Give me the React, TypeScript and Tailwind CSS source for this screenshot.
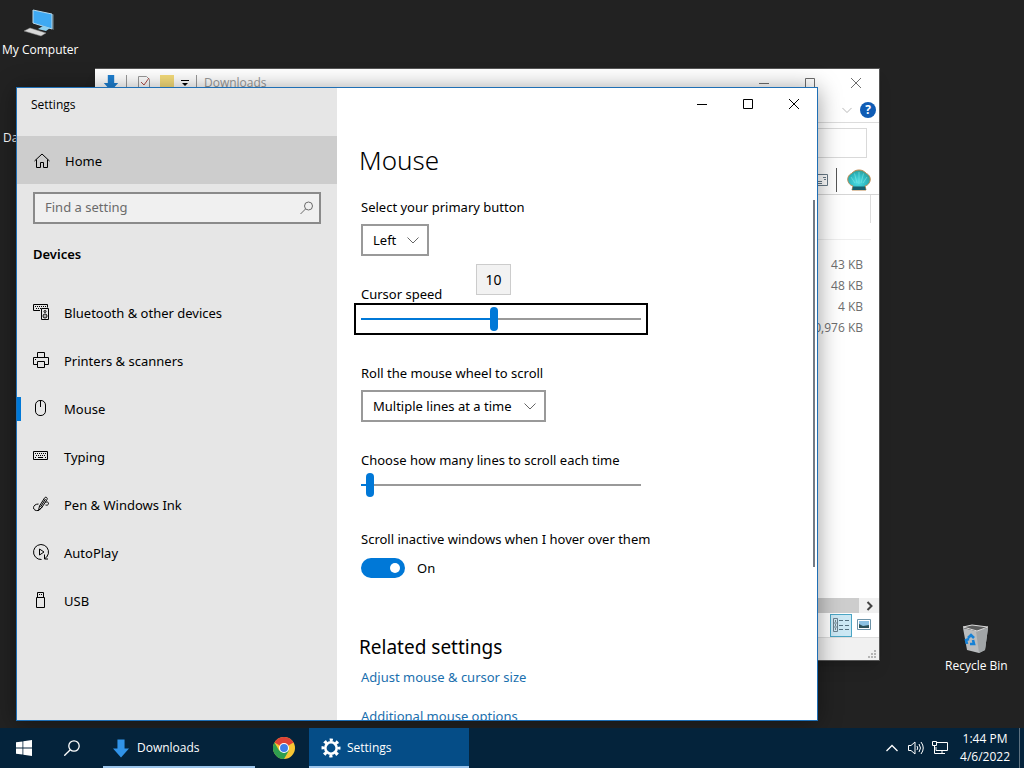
import React, { useState } from 'react';

const navItems = [
  { id: 'bluetooth', label: 'Bluetooth & other devices' },
  { id: 'printers', label: 'Printers & scanners' },
  { id: 'mouse', label: 'Mouse' },
  { id: 'typing', label: 'Typing' },
  { id: 'pen', label: 'Pen & Windows Ink' },
  { id: 'autoplay', label: 'AutoPlay' },
  { id: 'usb', label: 'USB' },
];

const fileSizes = ['43 KB', '48 KB', '4 KB', '40,976 KB'];

const Icon: React.FC<{ className?: string; box?: number; children: React.ReactNode }> = ({
  className = 'h-4 w-4',
  box = 16,
  children,
}) => (
  <svg
    viewBox={`0 0 ${box} ${box}`}
    className={`shrink-0 ${className}`}
    fill="none"
    stroke="currentColor"
    aria-hidden="true"
  >
    {children}
  </svg>
);

const NavIcon: React.FC<{ id: string }> = ({ id }) => {
  switch (id) {
    case 'bluetooth':
      return (
        <Icon>
          <path d="M7 6.500H.5v-6h14v3" />
          <path d="M2 2.500h11M3 4.500h5" strokeDasharray="1 1" />
          <path d="M8.500 4.500h7v11h-7z" />
          <circle cx="12" cy="7.500" r="1" />
          <circle cx="12" cy="12" r="2" />
          <path d="M11.500 12h1" />
        </Icon>
      );
    case 'printers':
      return (
        <Icon>
          <path d="M4.500 5V.5h7V5M4.500 12.500h-4v-7h15v7h-4" />
          <path d="M4.500 9.500h7v6h-7zM2 7.500h1" />
        </Icon>
      );
    case 'mouse':
      return (
        <Icon>
          <rect x="2.500" y=".5" width="10" height="15" rx="4.500" />
          <path d="M7.500 1v6" />
        </Icon>
      );
    case 'typing':
      return (
        <Icon>
          <path d="M.5 3.500h14v8H.5z" />
          <path d="M2 5.500h11M3 7.500h10" strokeDasharray="1 1" />
          <path d="M2 9.500h1M5 9.500h5M12 9.500h1" />
        </Icon>
      );
    case 'pen':
      return (
        <Icon>
          <path d="m5.500 14.500 1-4.500 5-8c1-1.600 3.500-.4 2.500 1.500L8.500 12z" />
          <path d="m7.500 11 5-8M5.500 8C2.500 8 .5 9.700.5 11.700s2 3.300 5 2.800L9 11M12.500 6.500c1.500-1 3-.5 3 1s-1.500 2-3 1.500" />
        </Icon>
      );
    case 'autoplay':
      return (
        <Icon>
          <path d="M8.500 15.500A7.500 7.500 0 1 1 13.800 12.800" />
          <path d="M11.500 10.500v4.500H15M11.500 15l2.500-2.500M6.500 5v6l4.500-3z" />
        </Icon>
      );
    default:
      return (
        <Icon>
          <path d="M4.500 5V.5h6V5M3.500 5.500h8v10h-8z" />
          <path d="M6 2.500h1M8 2.500h1" />
        </Icon>
      );
  }
};

const Chevron: React.FC<{ className?: string }> = ({ className = 'h-3 w-3' }) => (
  <Icon box={12} className={className}>
    <path d="m.5 3.500 5.500 5.500 5.500-5.500" />
  </Icon>
);

const WindowButtons: React.FC = () => (
  <div className="flex h-8 justify-end">
    <button aria-label="Minimize" className="flex w-[46px] items-center justify-center">
      <Icon className="h-3 w-3" box={12}>
        <path d="M1 6.500h10" />
      </Icon>
    </button>
    <button aria-label="Maximize" className="flex w-[46px] items-center justify-center">
      <Icon className="h-3 w-3" box={12}>
        <path d="M1.500 1.500h9v9h-9z" />
      </Icon>
    </button>
    <button aria-label="Close" className="flex w-[46px] items-center justify-center">
      <Icon className="h-3 w-3" box={12}>
        <path d="m1 1 10 10M11 1 1 11" />
      </Icon>
    </button>
  </div>
);

const DownArrow: React.FC<{ className: string }> = ({ className }) => (
  <svg viewBox="0 0 18 20" className={`shrink-0 ${className}`} aria-hidden="true">
    <path d="M5 0h8v10h5l-9 10-9-10h5z" fill="currentColor" />
  </svg>
);

interface SliderProps {
  id: string;
  min: number;
  max: number;
  value: number;
  onChange: (value: number) => void;
}

const Slider: React.FC<SliderProps> = ({ id, min, max, value, onChange }) => {
  const fill = ((value - min) / (max - min)) * 100;
  return (
    <input
      id={id}
      type="range"
      min={min}
      max={max}
      value={value}
      onChange={(e) => onChange(Number(e.target.value))}
      style={{ backgroundImage: `linear-gradient(to right, #0078d7 ${fill}%, #999999 ${fill}%)` }}
      className="block h-6 w-[280px] appearance-none bg-[length:100%_2px] bg-center bg-no-repeat outline-none [&::-webkit-slider-thumb]:h-6 [&::-webkit-slider-thumb]:w-2 [&::-webkit-slider-thumb]:appearance-none [&::-webkit-slider-thumb]:rounded-full [&::-webkit-slider-thumb]:bg-[#0078d7]"
    />
  );
};

interface DropdownProps {
  id: string;
  options: string[];
  className: string;
}

const Dropdown: React.FC<DropdownProps> = ({ id, options, className }) => (
  <div className={`relative h-8 ${className}`}>
    <select
      id={id}
      className="h-full w-full appearance-none border-2 border-[#999999] bg-white pl-2.5 text-[13px] text-black"
    >
      {options.map((option) => (
        <option key={option}>{option}</option>
      ))}
    </select>
    <Chevron className="pointer-events-none absolute top-2.5 right-2.5 h-3 w-3 text-[#666666]" />
  </div>
);

const Shell: React.FC = () => (
  <svg viewBox="0 0 24 22" className="h-[22px] w-6 shrink-0" aria-hidden="true">
    <defs>
      <radialGradient id="shell" cx="0.45" cy="0.6" r="0.6">
        <stop offset="0" stopColor="#4fe0e6" />
        <stop offset="0.7" stopColor="#2bb3bb" />
        <stop offset="1" stopColor="#3d9a8c" />
      </radialGradient>
    </defs>
    <path
      d="M6 17C2 16 0 12 1 8.500c.6-2 2-3.200 3.500-4C7 2 9 1 12 1s5 1 7.500 3.500c1.500.8 2.900 2 3.500 4 1 3.500-1 7.500-5 8.500l1 4H5z"
      fill="url(#shell)"
      stroke="#c08a50"
    />
    <path d="M12 15V3M10 14 7.500 4.500M14 14l2.500-9.500M8 14 4 8M16 14l4-6" stroke="#7fe6e0" strokeWidth=".6" fill="none" />
    <path d="M6 17.500h12l.8 3.500H5.200z" fill="#17606f" />
  </svg>
);

const ExplorerWindow: React.FC = () => (
  <section
    aria-label="Downloads"
    className="absolute top-[68px] left-[95px] flex h-[593px] w-[785px] flex-col border-t border-r border-b border-[#555555] bg-white text-[#6d6d6d] shadow-lg"
  >
    <header className="flex h-7 items-center">
      <div className="flex flex-1 items-center pl-2 text-xs text-[#999999]">
        <DownArrow className="h-4 w-4 text-[#1e7fd0]" />
        <span className="ml-[7px] h-4 w-px bg-[#999999]" />
        <Icon className="ml-2.5 h-4 w-4">
          <path d="M1.500 1.500h8l3 3v10h-11z" />
          <path d="m4 7 3 3 5-7" stroke="#b0504a" />
        </Icon>
        <span className="ml-[7px] h-4 w-3.5 bg-[#f5dc7a]" />
        <Icon className="ml-1.5 h-3 w-2.5 text-black" box={10}>
          <path d="M1 2.500h8" />
          <path d="M2 5h6L5 8z" fill="currentColor" stroke="none" />
        </Icon>
        <span className="mr-[7px] ml-1.5 h-4 w-px bg-[#999999]" />
        Downloads
      </div>
      <WindowButtons />
    </header>
    <div className="flex h-[26px] items-center justify-end gap-2 border-b border-[#dcdcdc] pr-[3px]">
      <Chevron className="h-2.5 w-2.5 text-[#aaaaaa]" />
      <button
        aria-label="Help"
        className="flex h-4 w-4 items-center justify-center rounded-full bg-[#0f5cb5] text-xs font-bold text-white"
      >
        ?
      </button>
    </div>
    <div className="flex h-10 items-center pr-3">
      <input aria-label="Search Downloads" className="ml-auto h-[30px] w-48 border border-[#d9d9d9]" />
    </div>
    <div className="flex h-8 items-center justify-end border-b border-[#d5d5d5] pt-0.5 pr-2">
      <Icon className="h-4 w-4">
        <path d="M0 2.500h14.500v11H0M10 5.500h3M11 7.500h2M0 9.500h9M0 11.500h9" stroke="#687a87" />
      </Icon>
      <span className="mr-2.5 ml-[7px] h-6 w-px bg-[#555555]" />
      <Shell />
    </div>
    <div className="mr-2 h-[45px] border-b border-[#eeeeee]">
      <div className="h-7 border-r border-[#dddddd]" />
    </div>
    <ul className="flex-1 pt-3.5 pr-4 text-right text-xs leading-[21px]">
      {fileSizes.map((size) => (
        <li key={size}>{size}</li>
      ))}
    </ul>
    <div className="flex h-[15px] justify-end bg-[#f0f0f0]">
      <span className="flex-1 bg-[#cdcdcd]" />
      <button aria-label="Scroll right" className="flex w-5 items-center justify-center text-[#444444]">
        <Icon className="h-2.5 w-2.5" box={10}>
          <path d="m3.500 1 4 4-4 4" strokeWidth="2" />
        </Icon>
      </button>
    </div>
    <div className="flex h-[25px] items-center justify-end gap-1 border-b border-[#dddddd] pr-[7px]">
      <button
        aria-label="Details view"
        className="flex h-[23px] w-[22px] items-center justify-center border border-[#4aa5c4] bg-[#cce8f4]"
      >
        <Icon>
          <path d="M.5 1.500h4v13h-4zM.5 6h4M.5 10h4" stroke="#6b7f8c" />
          <path d="M2 4h1M2 8h1M2 12h1" stroke="#222222" />
          <path d="M6 3.500h4M12 3.500h4M6 8.500h4M12 8.500h4M6 12.500h4M12 12.500h4" stroke="#54707f" />
        </Icon>
      </button>
      <button aria-label="Large icons view" className="flex h-[23px] w-4 items-center justify-center">
        <Icon className="h-4 w-4">
          <path d="M1.500 2.500h13v10h-13z" stroke="#6d93a8" fill="#ffffff" />
          <path d="M3 4h10v7H3z" fill="#8cc1e2" stroke="none" />
          <path d="m3 7 4 2 6-1v3H3z" fill="#2d5057" stroke="none" />
        </Icon>
      </button>
    </div>
    <div className="flex h-[22px] items-end justify-end bg-[#f1f1f1] p-0.5">
      <Icon className="h-2.5 w-2.5 text-[#b5b5b5]" box={10}>
        <path d="M1 9h2M4 9h2M7 9h2M4 6h2M7 6h2M7 3h2" strokeWidth="2" />
      </Icon>
    </div>
  </section>
);

const SettingsWindow: React.FC = () => {
  const [active, setActive] = useState('mouse');
  const [speed, setSpeed] = useState(10);
  const [lines, setLines] = useState(3);
  const [hoverScroll, setHoverScroll] = useState(true);

  return (
    <section
      aria-label="Settings"
      className="absolute top-[87px] left-4 flex h-[634px] w-[802px] border border-[#1f6fb5] bg-white font-['Noto_Sans','Open_Sans',sans-serif] text-[13px] leading-5 text-black shadow-[0_2px_22px_rgba(0,0,0,0.4)]"
    >
      <aside className="w-80 shrink-0 bg-[#e6e6e6]">
        <h1 className="h-12 pt-[7px] pl-3.5 font-['Open_Sans','Noto_Sans',sans-serif] text-xs leading-5">
          Settings
        </h1>
        <button className="flex h-12 w-full items-center bg-[#cdcdcd] pt-0.5 pl-[17px] text-left">
          <Icon>
            <path d="m.5 8 7.500-7 7.500 7M2.500 6.500v8h4v-5h3v5h4v-8" />
          </Icon>
          <span className="ml-[15px]">Home</span>
        </button>
        <div className="relative mx-4 mt-2">
          <input
            type="text"
            aria-label="Find a setting"
            placeholder="Find a setting"
            className="block h-8 w-full border-2 border-[#8a8a8a] bg-[#f0f0f0] pb-0.5 pl-2.5 outline-none placeholder:text-[#6b6b6b]"
          />
          <Icon className="pointer-events-none absolute top-2 right-1.5 h-4 w-4 text-[#6b6b6b]">
            <circle cx="9.500" cy="6" r="4" />
            <path d="m6.500 9-5 5" />
          </Icon>
        </div>
        <h2 className="mt-5 pl-4 font-semibold">Devices</h2>
        <nav className="mt-[25px]">
          {navItems.map((item) => (
            <button
              key={item.id}
              onClick={() => setActive(item.id)}
              className="flex h-12 w-full items-center text-left"
            >
              <span className={`h-6 w-1 ${active === item.id ? 'bg-[#0078d7]' : ''}`} />
              <span className="ml-3 pb-0.5">
                <NavIcon id={item.id} />
              </span>
              <span className="ml-[15px]">{item.label}</span>
            </button>
          ))}
        </nav>
      </aside>

      <main className="relative flex-1 overflow-hidden">
        <WindowButtons />
        <h2 className="mt-5 pl-[22px] text-[26px] leading-10 font-light">Mouse</h2>
        <div className="pl-6">
          <label htmlFor="primary-button" className="mt-[17px] block">
            Select your primary button
          </label>
          <Dropdown id="primary-button" options={['Left', 'Right']} className="mt-[7px] w-[68px]" />

          <div className="relative mt-7">
            <label htmlFor="cursor-speed" className="block h-[19px]">
              Cursor speed
            </label>
            <output
              htmlFor="cursor-speed"
              className="absolute bottom-2 left-[115px] flex h-[31px] w-[35px] items-center justify-center border border-[#cccccc] bg-[#f2f2f2] text-sm"
            >
              {speed}
            </output>
          </div>
        </div>
        <div className="ml-[17px] w-[294px] border-2 border-black px-[5px] py-0.5">
          <Slider id="cursor-speed" min={1} max={20} value={speed} onChange={setSpeed} />
        </div>
        <div className="pl-6">
          <label htmlFor="wheel-mode" className="mt-7 block">
            Roll the mouse wheel to scroll
          </label>
          <Dropdown
            id="wheel-mode"
            options={['Multiple lines at a time', 'One screen at a time']}
            className="mt-[7px] w-[185px]"
          />

          <label htmlFor="scroll-lines" className="mt-7 mb-[3px] block">
            Choose how many lines to scroll each time
          </label>
          <Slider id="scroll-lines" min={1} max={100} value={lines} onChange={setLines} />

          <p id="hover-scroll" className="mt-8">
            Scroll inactive windows when I hover over them
          </p>
          <div className="mt-[9px] flex items-center">
            <button
              role="switch"
              aria-checked={hoverScroll}
              aria-labelledby="hover-scroll"
              onClick={() => setHoverScroll(!hoverScroll)}
              className={`flex h-5 w-11 items-center rounded-full px-[5px] ${
                hoverScroll ? 'justify-end bg-[#0078d7]' : 'bg-[#999999]'
              }`}
            >
              <span className="h-2.5 w-2.5 rounded-full bg-white" />
            </button>
            <span className="ml-3">{hoverScroll ? 'On' : 'Off'}</span>
          </div>
        </div>
        <h3 className="mt-[53px] pl-[22px] text-[19px] leading-8">Related settings</h3>
        <div className="flex flex-col items-start gap-[19px] pt-1 pl-6 text-[#1a6fae]">
          <a href="#cursor-size">Adjust mouse &amp; cursor size</a>
          <a href="#mouse-options">Additional mouse options</a>
        </div>
        <span className="absolute top-28 right-0.5 h-[367px] w-0.5 bg-[#737b85]" />
      </main>
    </section>
  );
};

const Taskbar: React.FC = () => (
  <footer className="relative flex h-10 shrink-0 items-stretch bg-[#04233b] text-xs text-white">
    <button aria-label="Start" className="flex w-12 items-center justify-center">
      <svg viewBox="0 0 16 16" className="h-4 w-4" fill="currentColor" aria-hidden="true">
        <path d="M0 2.300 6.500 1.400v6.200H0zM7.300 1.200 16 0v7.600H7.300zM0 8.400h6.500v6.200L0 13.700zM7.300 8.400H16V16l-8.700-1.200z" />
      </svg>
    </button>
    <button aria-label="Search" className="flex w-12 items-center justify-center">
      <Icon className="h-4 w-4">
        <circle cx="10" cy="6" r="5.200" strokeWidth="1.300" />
        <path d="m6.300 9.700-6 6" strokeWidth="1.300" />
      </Icon>
    </button>
    <button className="ml-[7px] flex w-[152px] items-center border-b-2 border-[#9cc5ec] pt-0.5 pl-2.5">
      <DownArrow className="h-[19px] w-4 text-[#3193e8]" />
      <span className="ml-2">Downloads</span>
    </button>
    <button aria-label="Chrome" className="ml-3 flex w-[42px] items-center justify-end pr-3.5">
      <svg viewBox="0 0 24 24" className="h-[22px] w-[22px] shrink-0" aria-hidden="true">
        <circle cx="12" cy="12" r="12" fill="#f9c633" />
        <path d="M12 12 1.600 6A12 12 0 0 1 22.400 6z" fill="#df4237" />
        <path d="M1.600 6A12 12 0 0 0 12 24l5.200-9L12 12 6.800 15z" fill="#2f9e4f" />
        <path d="M12 6.500h10.600A12 12 0 0 0 22.400 6z" fill="#df4237" />
        <circle cx="12" cy="12" r="5.500" fill="#ffffff" />
        <circle cx="12" cy="12" r="4.300" fill="#3e7de8" />
      </svg>
    </button>
    <button className="flex w-40 items-center border-b-2 border-[#9cc5ec] bg-[#054d87] pt-0.5 pl-3">
      <svg viewBox="0 0 20 20" className="h-5 w-5" aria-hidden="true">
        <circle cx="10" cy="10" r="5.700" fill="none" stroke="currentColor" strokeWidth="2.600" />
        <circle
          cx="10"
          cy="10"
          r="8"
          fill="none"
          stroke="currentColor"
          strokeWidth="3"
          strokeDasharray="3.140 3.143"
          strokeDashoffset="1.570"
        />
      </svg>
      <span className="ml-1.5">Settings</span>
    </button>
    <div className="ml-auto flex items-center">
      <button aria-label="Show hidden icons">
        <Icon className="h-3 w-3" box={12}>
          <path d="M.5 9 6 3.500 11.500 9" strokeWidth="1.300" />
        </Icon>
      </button>
      <button aria-label="Volume" className="ml-2.5">
        <Icon className="h-4 w-4">
          <path d="M.5 5.500H3l4-3.500v12L3 10.500H.5z" />
          <path d="M9 6q1.500 2 0 4M11 4q3 4 0 8M13 2q4.500 6 0 12" />
        </Icon>
      </button>
      <button aria-label="Network" className="ml-2">
        <Icon className="h-4 w-4">
          <path d="M5 2.500h10.500v8H4V7M.5 1.500h4v4h-4zM2.500 5.500v8H9M10 10.500v3M6 13.500h7" />
        </Icon>
      </button>
      <div className="ml-3 pr-[9px] text-center leading-[18px]">
        <p>1:44 PM</p>
        <p>4/6/2022</p>
      </div>
      <button aria-label="Show desktop" className="h-full w-[5px] border-l border-[#5e7180]" />
    </div>
  </footer>
);

const App: React.FC = () => (
  <div className="flex h-screen flex-col overflow-hidden bg-[#222222] font-['Open_Sans','Noto_Sans',sans-serif]">
    <div className="relative flex-1 overflow-hidden">
      <button className="absolute top-2 left-0.5 flex flex-col items-center text-xs leading-4 text-white">
        <svg viewBox="0 0 32 30" className="h-[30px] w-8" aria-hidden="true">
          <path d="m9 2 19 4v15L9 15z" fill="#3fa9f2" stroke="#b8d8ea" strokeWidth="1" />
          <path d="m28 6 1.500.5V22L28 21z" fill="#7b939f" />
          <path d="m14 21 5-3 7 2-4 3z" fill="#8fd0ee" />
          <path d="m0 23 6-3 16 5-5 3z" fill="#d8d8d8" stroke="#8b8b8b" strokeWidth=".5" />
        </svg>
        <span className="mt-1">My Computer</span>
      </button>
      <span className="absolute top-[130px] left-[3px] text-xs leading-4 text-white">Da</span>
      <button className="absolute top-[622px] left-[945px] flex flex-col items-center text-xs leading-4 whitespace-nowrap text-white">
        <svg viewBox="0 0 28 32" className="h-8 w-7" aria-hidden="true">
          <path d="m1 6 4 22 12 3 6-3 3-22-12 3z" fill="#b9bcbe" />
          <path d="m14 9 12-3-3 22-6 3z" fill="#a1a5a7" />
          <path d="m1 5 9-2 16 2-11 4z" fill="#5b5c5c" stroke="#dddddd" />
          <path d="m6 16 3-3 3 3M11 18l1 4H8M5 22l-1-4 3-1" fill="none" stroke="#1581d6" strokeWidth="2.600" />
        </svg>
        <span className="mt-1">Recycle Bin</span>
      </button>
      <ExplorerWindow />
      <SettingsWindow />
    </div>
    <Taskbar />
  </div>
);

export default App;
